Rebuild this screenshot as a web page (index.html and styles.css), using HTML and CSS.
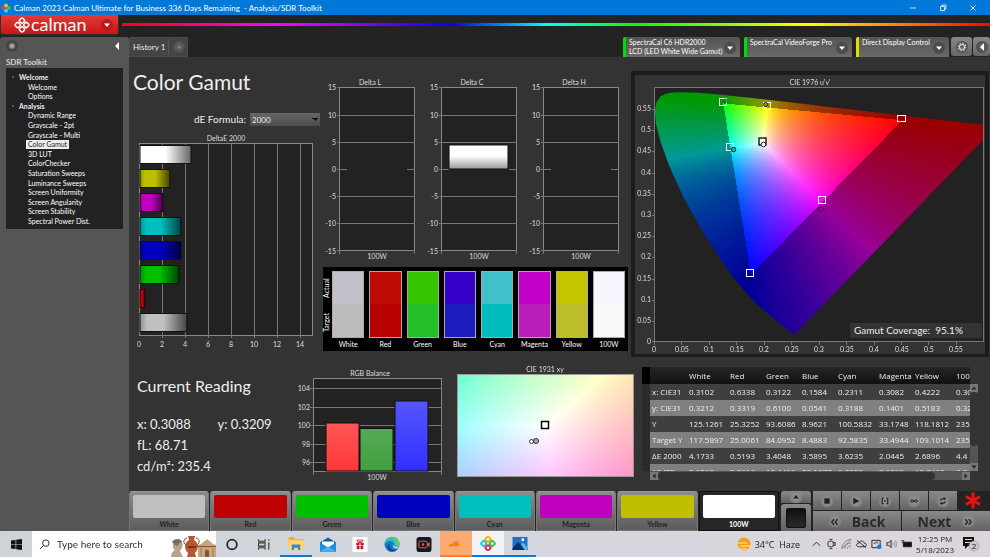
FILE: index.html
```html
<!DOCTYPE html>
<html lang="en">

<head>
    <meta charset="UTF-8">
    <meta name="viewport" content="width=device-width, initial-scale=1.0">
    <title>Calman - SDR Toolkit</title>
    <link rel="stylesheet" href="styles.css">
</head>

<body>
    <header class="titlebar">
        <svg class="app-icon" viewBox="0 0 10 10">
            <circle cx="5" cy="2.4" r="2" fill="#e8c21c" />
            <circle cx="2.3" cy="5" r="2" fill="#e6355f" />
            <circle cx="7.6" cy="5" r="2" fill="#37c948" />
            <circle cx="5" cy="7.7" r="2" fill="#3fd0e8" />
        </svg>
        <span class="title-text">Calman 2023 Calman Ultimate for Business 336 Days Remaining&nbsp; - Analysis/SDR Toolkit</span>
        <button class="win-btn" aria-label="Minimize"><svg viewBox="0 0 8 8"><path d="M1 4h6" /></svg></button>
        <button class="win-btn" aria-label="Restore"><svg viewBox="0 0 8 8"><path d="M1.5 2.5h4v4h-4zM3 2.500V1h4v4H5.500" /></svg></button>
        <button class="win-btn" aria-label="Close"><svg viewBox="0 0 8 8"><path d="M1.500 1.500l5 5M6.500 1.500l-5 5" /></svg></button>
    </header>

    <div class="brandbar">
        <button class="logo">
            <svg class="logo-mark" viewBox="0 0 16 16">
                <g fill="none" stroke="#fff" stroke-width="1.500" transform="rotate(45 8 8)">
                    <rect x="2.700" y="2.700" width="4.500" height="4.500" rx="1.500" />
                    <rect x="8.800" y="2.700" width="4.500" height="4.500" rx="1.500" />
                    <rect x="2.700" y="8.800" width="4.500" height="4.500" rx="1.500" />
                    <rect x="8.800" y="8.800" width="4.500" height="4.500" rx="1.500" />
                </g>
            </svg>
            <span class="logo-name">calman</span>
            <span class="knob red"><svg viewBox="0 0 8 8"><path d="M0 2h8L4 6.500z" /></svg></span>
        </button>
        <div class="spectrum"></div>
    </div>

    <div class="app">
        <aside class="sidebar">
            <div class="side-top">
                <span class="knob dot"></span>
                <button class="knob" aria-label="Collapse"><svg viewBox="0 0 8 8"><path d="M6 0v8L2 4z" /></svg></button>
            </div>
            <h2>SDR Toolkit</h2>
            <nav class="tree">
                <h3>Welcome</h3>
                <a href="#">Welcome</a>
                <a href="#">Options</a>
                <h3>Analysis</h3>
                <a href="#">Dynamic Range</a>
                <a href="#">Grayscale - 2pt</a>
                <a href="#">Grayscale - Multi</a>
                <a href="#" class="current">Color Gamut</a>
                <a href="#">3D LUT</a>
                <a href="#">ColorChecker</a>
                <a href="#">Saturation Sweeps</a>
                <a href="#">Luminance Sweeps</a>
                <a href="#">Screen Uniformity</a>
                <a href="#">Screen Angularity</a>
                <a href="#">Screen Stability</a>
                <a href="#">Spectral Power Dist.</a>
            </nav>
        </aside>

        <main class="main">
            <div class="tabs">
                <div class="tab">
                    <span>History 1</span>
                    <button class="knob" aria-label="Add history">+</button>
                </div>
                <div class="devices">
                    <button class="device meter">
                        <span>SpectraCal C6 HDR2000<br>LCD (LED White Wide Gamut)</span>
                        <i class="knob"><svg viewBox="0 0 8 8"><path d="M0 2h8L4 6.500z" /></svg></i>
                    </button>
                    <button class="device source">
                        <span>SpectraCal VideoForge Pro</span>
                        <i class="knob"><svg viewBox="0 0 8 8"><path d="M0 2h8L4 6.500z" /></svg></i>
                    </button>
                    <button class="device display">
                        <span>Direct Display Control</span>
                        <i class="knob"><svg viewBox="0 0 8 8"><path d="M0 2h8L4 6.500z" /></svg></i>
                    </button>
                    <div class="tools">
                        <button class="tool" aria-label="Settings">
                            <i class="knob"><svg viewBox="0 0 12 12"><circle cx="6" cy="6" r="3" fill="none" stroke="#ddd" stroke-width="1.300" /><circle cx="6" cy="6" r="4.600" fill="none" stroke="#ddd" stroke-width="1.400" stroke-dasharray="1.600 2" /></svg></i>
                        </button>
                        <button class="tool narrow" aria-label="Hide">
                            <i class="knob"><svg viewBox="0 0 8 8"><path d="M6 0v8L2 4z" /></svg></i>
                        </button>
                    </div>
                </div>
            </div>

            <div class="dash">
                <section class="delta-e">
                    <h1>Color Gamut</h1>
                    <div class="formula">
                        <label for="formula">dE Formula:</label>
                        <select id="formula">
                            <option>2000</option>
                        </select>
                    </div>
                    <svg class="chart" viewBox="0 0 191 220">
                        <defs>
                            <linearGradient id="shade">
                                <stop offset="0" stop-color="#000" stop-opacity=".25" />
                                <stop offset=".15" stop-color="#000" stop-opacity="0" />
                                <stop offset=".5" stop-color="#000" stop-opacity="0" />
                                <stop offset="1" stop-color="#000" stop-opacity=".65" />
                            </linearGradient>
                            <linearGradient id="whiteShade">
                                <stop offset=".5" stop-color="#fff" />
                                <stop offset="1" stop-color="#666" />
                            </linearGradient>
                        </defs>
                        <text x="97" y="9" class="mid">DeltaE 2000</text>
                        <rect class="plot" x="10.500" y="11.500" width="173" height="192" />
                        <path class="grid" d="M33.500 12v194M56.500 12v194M79.500 12v194M102.500 12v194M125.500 12v194M148.500 12v194M171.500 12v194" />
                        <g stroke="#111">
                            <rect x="11" y="13.500" width="51" height="18" fill="url(#whiteShade)" />
                            <rect x="11" y="37.500" width="30" height="18" fill="#bfbf00" />
                            <rect x="11" y="61.500" width="23" height="18" fill="#bf00bf" />
                            <rect x="11" y="85.500" width="41" height="18" fill="#00bfbf" />
                            <rect x="11" y="109.500" width="41" height="18" fill="#0000bf" />
                            <rect x="11" y="133.500" width="39" height="18" fill="#00bf00" />
                            <rect x="11" y="157.500" width="5" height="18" fill="#bf0000" />
                            <rect x="11" y="181.500" width="47" height="18" fill="#c0c0c0" />
                        </g>
                        <g fill="url(#shade)">
                            <rect x="11" y="38" width="30" height="17" />
                            <rect x="11" y="62" width="23" height="17" />
                            <rect x="11" y="86" width="41" height="17" />
                            <rect x="11" y="110" width="41" height="17" />
                            <rect x="11" y="134" width="39" height="17" />
                            <rect x="11" y="158" width="5" height="17" />
                            <rect x="11" y="182" width="47" height="17" />
                        </g>
                        <g class="mid">
                            <text x="10" y="215">0</text>
                            <text x="33" y="215">2</text>
                            <text x="56" y="215">4</text>
                            <text x="79" y="215">6</text>
                            <text x="102" y="215">8</text>
                            <text x="125" y="215">10</text>
                            <text x="148" y="215">12</text>
                            <text x="171" y="215">14</text>
                        </g>
                    </svg>
                </section>

                <section class="deltas">
                    <svg class="chart" viewBox="0 0 308 192">
                        <defs>
                            <linearGradient id="barC" x2="0" y2="1">
                                <stop offset=".45" stop-color="#fff" />
                                <stop offset="1" stop-color="#999" />
                            </linearGradient>
                            <g id="frame">
                                <rect class="plot" x="19.500" y="15.500" width="75" height="163" />
                                <path class="grid" d="M17 15.500h3M17 43.500h78M17 70.500h78M17 97.500h10M87 97.500h8M17 124.500h78M17 151.500h78M17 178.500h3M19.500 178v4M94.500 178v4" />
                            </g>
                        </defs>
                        <use href="#frame" />
                        <use href="#frame" x="102" />
                        <use href="#frame" x="204" />
                        <rect x="129" y="73" width="59" height="24" fill="url(#barC)" stroke="#111" />
                        <g class="mid">
                            <text x="50" y="13">Delta L</text>
                            <text x="152" y="13">Delta C</text>
                            <text x="254" y="13">Delta H</text>
                            <text x="57" y="187">100W</text>
                            <text x="159" y="187">100W</text>
                            <text x="261" y="187">100W</text>
                        </g>
                        <g class="end">
                            <text x="16" y="18">15</text>
                            <text x="16" y="46">10</text>
                            <text x="16" y="73">5</text>
                            <text x="16" y="100">0</text>
                            <text x="16" y="127">-5</text>
                            <text x="16" y="154">-10</text>
                            <text x="16" y="182">-15</text>
                            <text x="118" y="18">15</text>
                            <text x="118" y="46">10</text>
                            <text x="118" y="73">5</text>
                            <text x="118" y="100">0</text>
                            <text x="118" y="127">-5</text>
                            <text x="118" y="154">-10</text>
                            <text x="118" y="182">-15</text>
                            <text x="220" y="18">15</text>
                            <text x="220" y="46">10</text>
                            <text x="220" y="73">5</text>
                            <text x="220" y="100">0</text>
                            <text x="220" y="127">-5</text>
                            <text x="220" y="154">-10</text>
                            <text x="220" y="182">-15</text>
                        </g>
                    </svg>
                    <div class="compare">
                        <div class="compare-side"><span>Actual</span><span>Target</span></div>
                        <div class="patch white"><i></i>White</div>
                        <div class="patch red"><i></i>Red</div>
                        <div class="patch green"><i></i>Green</div>
                        <div class="patch blue"><i></i>Blue</div>
                        <div class="patch cyan"><i></i>Cyan</div>
                        <div class="patch magenta"><i></i>Magenta</div>
                        <div class="patch yellow"><i></i>Yellow</div>
                        <div class="patch full"><i></i>100W</div>
                    </div>
                </section>

                <section class="gamut">
                    <canvas id="uv" width="350" height="278"></canvas>
                    <svg class="chart" viewBox="0 0 350 278">
                        <text x="175" y="9" class="mid">CIE 1976 u'v'</text>
                        <path class="grid" d="M19.500 266V11.500h329V266M17 265.500h332" />
                        <path class="grid" d="M17 33.500h3M17 54.500h3M17 75.500h3M17 97.500h3M17 118.500h3M17 139.500h3M17 160.500h3M17 181.500h3M17 203.500h3M17 224.500h3M17 245.500h3" />
                        <path class="grid" d="M19.500 265v4M46.500 265v4M74.500 265v4M101.500 265v4M129.500 265v4M156.500 265v4M184.500 265v4M211.500 265v4M239.500 265v4M266.500 265v4M293.500 265v4M321.500 265v4" />
                        <g class="end">
                            <text x="16" y="35">0.55</text>
                            <text x="16" y="56">0.5</text>
                            <text x="16" y="77">0.45</text>
                            <text x="16" y="99">0.4</text>
                            <text x="16" y="120">0.35</text>
                            <text x="16" y="141">0.3</text>
                            <text x="16" y="162">0.25</text>
                            <text x="16" y="183">0.2</text>
                            <text x="16" y="205">0.15</text>
                            <text x="16" y="226">0.1</text>
                            <text x="16" y="247">0.05</text>
                            <text x="16" y="268">0</text>
                        </g>
                        <g class="mid">
                            <text x="19" y="276">0</text>
                            <text x="47" y="276">0.05</text>
                            <text x="74" y="276">0.1</text>
                            <text x="102" y="276">0.15</text>
                            <text x="129" y="276">0.2</text>
                            <text x="157" y="276">0.25</text>
                            <text x="184" y="276">0.3</text>
                            <text x="212" y="276">0.35</text>
                            <text x="239" y="276">0.4</text>
                            <text x="267" y="276">0.45</text>
                            <text x="294" y="276">0.5</text>
                            <text x="321" y="276">0.55</text>
                        </g>
                        <g fill="none" stroke="#fff" stroke-width="1">
                            <rect x="84.500" y="22.500" width="7" height="7" />
                            <rect x="128.500" y="26.500" width="7" height="7" />
                            <rect x="262.500" y="39.500" width="8" height="6" />
                            <rect x="91.500" y="67.500" width="7" height="7" />
                            <rect x="183.500" y="120.500" width="7" height="7" />
                            <rect x="111.500" y="193.500" width="7" height="7" />
                        </g>
                        <g stroke="#222" fill="none">
                            <rect x="124" y="62" width="7" height="7" stroke-width="1.500" />
                            <circle cx="90" cy="25" r="2" stroke="#063" />
                            <circle cx="130.500" cy="28.500" r="2" />
                            <circle cx="265" cy="43" r="2" stroke="#600" />
                            <circle cx="98.500" cy="73.500" r="2.300" fill="#0bb" />
                            <circle cx="128.500" cy="68.500" r="2.300" fill="#fff" />
                            <circle cx="186" cy="133" r="2" fill="#a0a" stroke="#404" />
                            <circle cx="124" cy="203" r="2" stroke="#006" />
                        </g>
                    </svg>
                    <div class="coverage">Gamut Coverage:&nbsp; 95.1%</div>
                </section>
            </div>

            <div class="dash lower">
                <section class="reading">
                    <h2>Current Reading</h2>
                    <div class="values">
                        <span>x: 0.3088</span>
                        <span>y: 0.3209</span>
                        <span>fL: 68.71</span>
                        <span></span>
                        <span>cd/m²: 235.4</span>
                    </div>
                </section>

                <section>
                    <svg class="chart" viewBox="0 0 148 122">
                        <defs>
                            <linearGradient id="rr" x2="0" y2="1"><stop stop-color="#f55" /><stop offset="1" stop-color="#ff3838" /></linearGradient>
                            <linearGradient id="gg" x2="0" y2="1"><stop stop-color="#5a5" /><stop offset="1" stop-color="#3f9f3f" /></linearGradient>
                            <linearGradient id="bb" x2="0" y2="1"><stop stop-color="#55f" /><stop offset="1" stop-color="#3030ff" /></linearGradient>
                        </defs>
                        <text x="72" y="12" class="mid">RGB Balance</text>
                        <rect class="plot" x="15.500" y="14.500" width="128" height="93" />
                        <path class="grid" d="M12 24.500h132M12 43.500h132M12 61.500h132M12 80.500h132M12 98.500h132M15.500 107v4M143.500 107v4" />
                        <g stroke="#111">
                            <rect x="28" y="59" width="33" height="48" fill="url(#rr)" />
                            <rect x="62" y="64.500" width="33" height="42.500" fill="url(#gg)" />
                            <rect x="97" y="37" width="33" height="70" fill="url(#bb)" />
                        </g>
                        <g class="end">
                            <text x="12" y="27">104</text>
                            <text x="12" y="46">102</text>
                            <text x="12" y="64">100</text>
                            <text x="12" y="83">98</text>
                            <text x="12" y="101">96</text>
                        </g>
                        <text x="79" y="116" class="mid">100W</text>
                    </svg>
                </section>

                <section class="xy">
                    <canvas id="xy" width="193" height="122"></canvas>
                    <svg class="chart" viewBox="0 0 193 122">
                        <text x="99" y="8" class="mid">CIE 1931 xy</text>
                        <rect x="11.500" y="10.500" width="176" height="102" fill="none" stroke="#999" />
                        <rect x="95.500" y="57.500" width="7" height="7" fill="#fff" stroke="#000" stroke-width="1.500" />
                        <circle cx="85.500" cy="77.500" r="2" fill="#fff" stroke="#333" />
                        <circle cx="90" cy="77" r="2.500" fill="#aaa" stroke="#333" />
                    </svg>
                </section>

                <section class="data">
                    <div class="table-wrap">
                        <table>
                            <thead>
                                <tr><th></th><th>White</th><th>Red</th><th>Green</th><th>Blue</th><th>Cyan</th><th>Magenta</th><th>Yellow</th><th>100W</th></tr>
                            </thead>
                            <tbody>
                                <tr><td>x: CIE31</td><td>0.3102</td><td>0.6338</td><td>0.3122</td><td>0.1584</td><td>0.2311</td><td>0.3082</td><td>0.4222</td><td>0.3088</td></tr>
                                <tr><td>y: CIE31</td><td>0.3212</td><td>0.3319</td><td>0.6100</td><td>0.0541</td><td>0.3188</td><td>0.1401</td><td>0.5183</td><td>0.3209</td></tr>
                                <tr><td>Y</td><td>125.1261</td><td>25.3252</td><td>93.6086</td><td>8.9621</td><td>100.5832</td><td>33.1748</td><td>118.1812</td><td>235.4</td></tr>
                                <tr><td>Target Y</td><td>117.5897</td><td>25.0061</td><td>84.0952</td><td>8.4883</td><td>92.5835</td><td>33.4944</td><td>109.1014</td><td>235.4</td></tr>
                                <tr><td>ΔE 2000</td><td>4.1733</td><td>0.5193</td><td>3.4048</td><td>3.5895</td><td>3.6235</td><td>2.0445</td><td>2.6896</td><td>4.4</td></tr>
                                <tr><td>ΔE ITP</td><td>5.6298</td><td>5.0616</td><td>13.4491</td><td>20.1877</td><td>9.0852</td><td>7.9299</td><td>10.7468</td><td>3.3</td></tr>
                            </tbody>
                        </table>
                    </div>
                    <div class="scroll-y"><svg viewBox="0 0 8 8"><path d="M1.500 5.500L4 2.500l2.500 3z" /></svg><i></i><svg viewBox="0 0 8 8"><path d="M1.500 2.500L4 5.500l2.500-3z" /></svg></div>
                    <div class="scroll-x"><svg viewBox="0 0 8 8"><path d="M5.500 1.500L2.500 4l3 2.500z" /></svg><i></i><svg viewBox="0 0 8 8"><path d="M2.500 1.500L5.500 4l-3 2.500z" /></svg></div>
                </section>
            </div>

            <div class="bottom">
                <div class="swatches">
                    <button class="swatch white"><i></i>White</button>
                    <button class="swatch red"><i></i>Red</button>
                    <button class="swatch green"><i></i>Green</button>
                    <button class="swatch blue"><i></i>Blue</button>
                    <button class="swatch cyan"><i></i>Cyan</button>
                    <button class="swatch magenta"><i></i>Magenta</button>
                    <button class="swatch yellow"><i></i>Yellow</button>
                    <button class="swatch full active"><i></i>100W</button>
                </div>
                <div class="pattern">
                    <button aria-label="Pattern up"><i class="knob"><svg viewBox="0 0 8 8"><path d="M1 5.500h6L4 2z" /></svg></i></button>
                    <button class="pattern-view" aria-label="Pattern"><i></i></button>
                </div>
                <div class="controls">
                    <div class="transport">
                        <button aria-label="Stop"><i class="knob"><svg viewBox="0 0 12 12"><path d="M2 2h8v8H2z" /></svg></i></button>
                        <button aria-label="Play"><i class="knob"><svg viewBox="0 0 12 12"><path d="M2 1l9 5-9 5z" /></svg></i></button>
                        <button aria-label="Read series"><i class="knob"><svg viewBox="0 0 12 12"><path d="M1 1h3v1.500H2.700v7H4V11H1zM11 1H8v1.500h1.300v7H8V11h3zM4 6l2-2v1.300h2V6.700H6V8z" /></svg></i></button>
                        <button aria-label="Continuous"><i class="knob"><svg viewBox="0 0 12 12"><path d="M6 6C4.500 3.500 1 3.500 1 6s3.500 2.500 5 0 5-2.500 5 0-3.500 2.500-5 0z" fill="none" stroke="#222" stroke-width="1.500" /></svg></i></button>
                        <button aria-label="Repeat"><i class="knob"><svg viewBox="0 0 12 12"><path d="M2.500 5.500c0-2.500 2-3 5-3M9.500 6.500c0 2.500-2 3-5 3" fill="none" stroke="#222" stroke-width="1.700" /><path d="M7 0l4 2.500L7 5zM5 7L1 9.500 5 12z" /></svg></i></button>
                        <svg class="asterisk" viewBox="0 0 18 18"><path d="M9 1v16M2 5l14 8M16 5L2 13" /></svg>
                    </div>
                    <div class="steps">
                        <button><i class="knob">«</i>Back</button>
                        <button>Next<i class="knob">»</i></button>
                    </div>
                </div>
            </div>
        </main>
    </div>

    <footer class="taskbar">
        <button class="task" aria-label="Start"><svg viewBox="0 0 12 12" fill="#111"><path d="M0 1.700l5-.7v4.700H0zM5.700.9L12 0v5.700H5.700zM0 6.300h5V11l-5-.7zM5.700 6.300H12V12l-6.300-.9z" /></svg></button>
        <label class="search">
            <svg class="lens" viewBox="0 0 12 12"><circle cx="7.500" cy="4.500" r="3.500" /><path d="M5 7l-4 4" /></svg>
            <input type="text" placeholder="Type here to search" aria-label="Search">
            <svg class="museum" viewBox="0 0 46 22">
                <path d="M1 22c0-4 2-6 4-7-3-1-3-9 1-10 5-2 8 2 6 8l-2 3 3 6z" fill="#b5a58c" />
                <path d="M2 7c2-4 9-4 10 0l-3 1-1 3-3-1z" fill="#786c5c" />
                <path d="M18 1h7l-1 4c5 3 5 9 1 13l1 4h-9l1-4c-4-4-4-10 1-13z" fill="#b85532" />
                <path d="M17 3c-4 1-4 5-1 7M26 3c4 1 4 5 1 7" fill="none" stroke="#8b3a22" />
                <path d="M18 11h8v2h-8z" fill="#7a321e" />
                <path d="M28 22V10l3-1 6-5 6 5 3 1v12z" fill="#c9a57d" />
                <path d="M27 11h19v1H27zM35 22v-6q2-3 4 0v6z" fill="#7b5839" />
                <path d="M31 13v9M43 13v9" stroke="#9b7a55" />
            </svg>
        </label>
        <button class="task" aria-label="Cortana"><svg viewBox="0 0 14 14"><circle cx="7" cy="7" r="4.500" fill="none" stroke="#222" stroke-width="1.600" /></svg></button>
        <button class="task" aria-label="Task view"><svg viewBox="0 0 14 14" fill="none" stroke="#333"><path d="M2 2v2h6V2M2 12v-2h6v2M2 5.500h6v3H2zM11.500 2v1.500M11.500 5v7" /></svg></button>
        <button class="task open" aria-label="File Explorer"><svg viewBox="0 0 14 14"><path d="M0 1h5l1 2h8v9H0z" fill="#f2b32c" /><path d="M0 4h14v8H0z" fill="#ffd968" /><path d="M3 13V8h8v5H9v-2H5v2z" fill="#2f86d8" /></svg></button>
        <button class="task" aria-label="Mail"><svg viewBox="0 0 16 14"><path d="M0 5l8-5 8 5v9H0z" fill="#0a5ca8" /><path d="M2 4h12v6H2z" fill="#fff" /><path d="M0 5l8 5 8-5v9H0z" fill="#1f8de0" /><path d="M0 14l8-5 8 5z" fill="#47b5f2" /></svg></button>
        <button class="task" aria-label="Gift"><svg viewBox="0 0 16 16"><path d="M0 0h16v16H0z" fill="#fff" /><path d="M4 6h3.500v2.500H4zM8.500 6H12v2.500H8.500zM4.500 9h3v4h-3zM8.500 9h3v4h-3z" fill="#c3142b" /><path d="M8 6C5 6 4 3 6 3s2 3 2 3 0-3 2-3 1 3-2 3z" fill="none" stroke="#c3142b" /></svg></button>
        <button class="task" aria-label="Edge"><svg viewBox="0 0 16 16"><circle cx="8" cy="8" r="8" fill="#1479c9" /><path d="M0 8C0-2 16-3 16 7c0 4-6 4-6 1 1-4-6-6-10 0z" fill="#39bfb0" /><path d="M8 1c5 0 8 3 8 6 0 2-1 3-3 3 1-4-1-7-5-9z" fill="#65d65b" /><path d="M6 8c-2 4 2 7 8 5-3 3-8 3-10 0-2-2 0-5 2-5z" fill="#0c4b93" /><path d="M9 8c0 2 3 3 6 2l-1 2c-3 1-6-1-5-4z" fill="#d5d7df" /></svg></button>
        <button class="task" aria-label="Recorder"><svg viewBox="0 0 16 16"><rect width="16" height="16" rx="3" fill="#17191d" /><rect x="2.500" y="4.500" width="9" height="7" rx="1.500" fill="none" stroke="#ff5261" /><path d="M11.500 7l2.500-1.500v5L11.500 9z" fill="#ff5261" /><circle cx="7" cy="8" r="1.300" fill="#ff5261" /></svg></button>
        <button class="task orange" aria-label="Cloud"><svg viewBox="0 0 16 16"><path d="M0 11c0-2 2-3 4-2 1-4 6-5 7-1l1 3z" fill="#f6821f" /><path d="M12 11c0-2 0-3 1-3 2 0 3 1 3 3z" fill="#fbad41" /></svg></button>
        <button class="task open lit" aria-label="Calman"><svg viewBox="0 0 16 16"><g transform="rotate(45 8 8)" stroke-width="2" fill="#fff"><rect x="2.500" y="2.500" width="4.500" height="4.500" rx="1" stroke="#f0b500" /><rect x="9" y="2.500" width="4.500" height="4.500" rx="1" stroke="#35c53d" /><rect x="2.500" y="9" width="4.500" height="4.500" rx="1" stroke="#25c2dd" /><rect x="9" y="9" width="4.500" height="4.500" rx="1" stroke="#e5245e" /></g></svg></button>
        <button class="task open" aria-label="Photos"><svg viewBox="0 0 16 16"><path d="M0 1h16v14H0z" fill="#1d72c8" /><path d="M0 13l6-7 6 7 2-2 2 2v2H0z" fill="#0b2f63" /><path d="M9 9l2-2 5 5v3h-3z" fill="#55b5f5" /><circle cx="11" cy="4" r="1.500" fill="#fff" /></svg></button>

        <div class="tray">
            <svg class="sun" viewBox="0 0 14 14"><circle cx="7" cy="7" r="6.500" fill="#f6a01a" /><path d="M0 6h10M3 9h11M1 12h9" stroke="#ffd27a" stroke-width="1.300" /></svg>
            <span class="weather">34°C&nbsp; Haze</span>
            <svg viewBox="0 0 12 12"><path d="M2 8l4-4 4 4" /></svg>
            <svg viewBox="0 0 12 12"><rect x="2" y="3" width="6" height="6" rx="2" /><path d="M8 4.500h2v3H8M4 1h3M4 11h3" /></svg>
            <svg viewBox="0 0 12 12"><path d="M1 11C1 6 6 1 11 1M4 11c0-3 3-6 7-6M7 11c0-2 2-3 4-3M10 11l1-1M1 11L11 1" stroke="#777" /></svg>
            <svg viewBox="0 0 12 12"><path d="M3 9c-3 0-3-4 0-4 1-3 5-3 6 0 3 0 3 4 0 4zM1 2l10 8" /></svg>
            <svg viewBox="0 0 12 12"><path d="M1 2h9v8H1zM3 5h2l2-2M7 5h1" /><circle cx="9" cy="9" r="2.500" fill="#1f78d8" stroke="none" /></svg>
            <svg viewBox="0 0 12 12"><path d="M1 4.500h2L5.500 2v8L3 7.500H1z" /><path d="M7.500 4.500q1 1.500 0 3M9 3q2 3 0 6M10.500 2q2.500 4 0 8" stroke="#999" /></svg>
            <svg viewBox="0 0 12 12"><path d="M2.500 4h9v5h-9z" fill="#111" /><path d="M0 2.500h3v2H1" /></svg>
            <div class="clock">12:25 PM<br>5/18/2023</div>
            <svg class="note" viewBox="0 0 18 16"><path d="M1 1h11v9H6l-3 3v-3H1z" fill="#111" stroke="none" /><path d="M3 3.500h7M3 6.500h7" stroke="#ddd" /><circle cx="12" cy="10" r="5" fill="#c9c9ce" stroke="#888" stroke-width=".5" /><text x="12" y="13">2</text></svg>
        </div>
    </footer>

    <script src="script.js"></script>
</body>

</html>
```

FILE: styles.css
```css
* {
    box-sizing: border-box;
}

body {
    margin: 0;
    min-height: 100vh;
    display: flex;
    flex-direction: column;
    background: #232323;
    color: #eee;
    font-family: Lato, "Open Sans", sans-serif;
    font-size: 7px;
}

h1,
h2,
h3 {
    margin: 0;
    font-weight: normal;
}

button {
    margin: 0;
    padding: 0;
    border: 0;
    background: none;
    color: inherit;
    font: inherit;
}

svg {
    display: block;
}

/* Window title */
.titlebar {
    display: flex;
    align-items: center;
    height: 15px;
    padding: 0 2px 0 1px;
    background: #0078d7;
    color: #fff;
    font-size: 8px;
}

.app-icon {
    width: 10px;
    height: 10px;
    margin-right: 3px;
}

.title-text {
    flex: 1;
}

.win-btn {
    width: 30px;
    height: 15px;
    display: flex;
    align-items: center;
    justify-content: center;
}

.win-btn svg {
    width: 8px;
    fill: none;
    stroke: #fff;
    stroke-width: 0.8;
}

/* Logo and spectrum line */
.brandbar {
    display: flex;
    align-items: flex-start;
    gap: 4px;
    height: 22px;
    padding-left: 1px;
}

.logo {
    display: flex;
    align-items: center;
    width: 117px;
    height: 19px;
    padding-left: 13px;
    border-radius: 0 0 2px 2px;
    background: linear-gradient(#e23a3a, #c91515);
    box-shadow: 0 0 1px #f88;
}

.logo-mark {
    width: 16px;
    height: 16px;
}

.logo-name {
    margin-left: 1px;
    flex: 1;
    text-align: left;
    font: 18px/18px Lato, sans-serif;
    color: #fff;
    padding-bottom: 2px;
}

.spectrum {
    flex: 1;
    height: 3px;
    margin-top: 8px;
    background: linear-gradient(90deg, #f00, #f0f 18%, #00f 38%, #0ff 49%, #0f0 59%, #ff0 79%, #f00);
}

.knob {
    width: 12px;
    height: 12px;
    flex: none;
    display: flex;
    align-items: center;
    justify-content: center;
    border-radius: 50%;
    background: radial-gradient(#666, #444);
    font-style: normal;
}

.knob svg {
    width: 6px;
    height: 6px;
    fill: #fff;
}

.knob.red {
    background: #b91a1a;
    margin-right: 5px;
}

.knob.dot {
    background: radial-gradient(#aaa 15%, #444 45%);
}

.app {
    flex: 1;
    display: flex;
}

/* Sidebar */
.sidebar {
    width: 129px;
    flex: none;
    padding: 3px 6px;
    background: #555;
    border-radius: 3px 3px 0 0;
}

.side-top {
    display: flex;
    justify-content: space-between;
}

.side-top button {
    background: none;
}

.side-top svg {
    width: 8px;
    height: 8px;
}

.sidebar h2 {
    margin-top: 5px;
    font-size: 8px;
    line-height: 11px;
}

.tree {
    display: flex;
    flex-direction: column;
    align-items: flex-start;
    justify-content: space-between;
    min-height: 161px;
    padding: 5px 0 3px 20px;
    background: #222;
}

.tree h3 {
    margin-left: -7px;
    font-size: 7px;
    font-weight: bold;
    line-height: 9px;
}

.tree h3::before {
    content: "";
    display: inline-block;
    width: 2px;
    height: 2px;
    margin: 0 5px 2px -7px;
    background: #555;
}

.tree a {
    padding: 0 2px;
    color: #fff;
    line-height: 9px;
    text-decoration: none;
}

.tree a.current {
    background: #eee;
    color: #222;
}

/* Main column */
.main {
    flex: 1;
    min-width: 0;
    display: flex;
    flex-direction: column;
    background: #333;
}

.tabs {
    display: flex;
    justify-content: space-between;
    height: 20px;
    background: #232323;
}

.tab {
    display: flex;
    align-items: center;
    gap: 4px;
    width: 59px;
    padding-left: 4px;
    border-radius: 3px 3px 0 0;
    background: #444;
    box-shadow: inset 0 0 1px #888;
    font-size: 8px;
}

.tab span {
    padding-right: 3px;
    border-right: 1px solid #555;
    line-height: 16px;
    white-space: nowrap;
}

.tab .knob {
    color: #999;
}

.devices {
    display: flex;
    gap: 4px;
}

.device {
    display: flex;
    justify-content: space-between;
    padding: 1px 4px 0 3px;
    border-left: 3px solid #0d0;
    border-radius: 2px 3px 0 0;
    background: linear-gradient(#555, #6a6a6a);
    color: #fff;
    text-align: left;
    line-height: 9px;
    white-space: nowrap;
}

.device .knob {
    align-self: center;
    background: #4c4c4c;
}

.meter {
    width: 117px;
}

.source {
    width: 108px;
}

.display {
    width: 93px;
    border-color: #dd0;
}

.tools {
    display: flex;
    gap: 1px;
    margin-left: -2px;
}

.tool {
    width: 21px;
    height: 19px;
    display: flex;
    align-items: center;
    justify-content: center;
    border-radius: 3px;
    background: linear-gradient(#888, #666);
}

.tool.narrow {
    width: 17px;
}

.tool .knob svg {
    width: 10px;
    height: 10px;
}

.tool.narrow .knob svg {
    width: 8px;
    height: 8px;
}

/* Chart panels */
.dash {
    display: grid;
    grid-template-columns: 191fr 311fr 359fr;
}

.lower {
    grid-template-columns: 169fr 148fr 193fr 351fr;
    flex: 1;
    margin-top: 7px;
}

.chart {
    width: 100%;
}

.chart text {
    fill: #ddd;
    font-size: 7px;
}

.mid {
    text-anchor: middle;
}

.end {
    text-anchor: end;
}

.plot {
    fill: #222;
    stroke: #888;
}

.grid {
    fill: none;
    stroke: #777;
}

.delta-e h1 {
    padding: 11px 4px 0;
    font-size: 21px;
    line-height: 28px;
}

.formula {
    display: flex;
    align-items: center;
    justify-content: flex-end;
    gap: 4px;
    margin: 17px 0 6px;
    font-size: 10px;
    line-height: 13px;
}

.formula select {
    width: 70px;
    height: 13px;
    padding: 0 0 0 2px;
    border: 0;
    appearance: none;
    background: linear-gradient(45deg, transparent 50%, #111 50%) 62px 5px / 3px 3px no-repeat, linear-gradient(-45deg, transparent 50%, #111 50%) 65px 5px / 3px 3px no-repeat, linear-gradient(#666, #4c4c4c);
    color: #eee;
    font: 8px Lato, sans-serif;
}

.deltas {
    padding: 15px 3px 0 0;
}

.compare {
    display: flex;
    gap: 5px;
    height: 84px;
    margin: 3px 0 0 3px;
    padding: 4px 3px 0 0;
    background: #000;
    color: #fff;
}

.compare-side {
    display: flex;
    flex-direction: row-reverse;
    justify-content: space-around;
    width: 4px;
    height: 68px;
    writing-mode: vertical-rl;
    transform: rotate(180deg);
    line-height: 6px;
}

.patch {
    flex: 1 1 0;
    min-width: 0;
    display: flex;
    flex-direction: column;
    align-items: center;
    line-height: 13px;
}

.patch i {
    width: 100%;
    height: 68px;
    border: 1px solid #aaa;
    background: linear-gradient(var(--actual) 50%, var(--target) 50%);
}

.white { --actual: #c3c0c9; --target: #bcbcbc; --color: #bfbfbf; }
.patch.red, .swatch.red { --actual: #be0b06; --target: #b80000; --color: #bf0000; }
.green { --actual: #36c600; --target: #22bf28; --color: #00bf00; }
.blue { --actual: #3700ca; --target: #1e1ebe; --color: #0000bf; }
.cyan { --actual: #40c1ca; --target: #00bebe; --color: #00bfbf; }
.magenta { --actual: #c100c8; --target: #ba1fba; --color: #bf00bf; }
.yellow { --actual: #c4c500; --target: #bebe28; --color: #bfbf00; }
.full { --actual: #f8f6ff; --target: #f9f9f9; --color: #fff; }

.gamut,
.xy {
    display: grid;
    align-items: start;
}

.gamut > *,
.xy > * {
    grid-area: 1 / 1;
}

.gamut {
    align-self: start;
    margin-top: 14px;
    margin-right: 1px;
    padding-top: 1px;
    border: 4px solid #1c1c1c;
    border-bottom-width: 3px;
}

canvas {
    width: 100%;
    display: block;
}

.coverage {
    align-self: end;
    justify-self: end;
    width: 132px;
    margin: 0 3px 16px 0;
    padding-left: 4px;
    position: relative;
    background: #333;
    font-size: 10px;
    line-height: 15px;
}

/* Lower row */
.reading {
    padding: 11px 0 0 8px;
}

.reading h2 {
    font-size: 16px;
    line-height: 22px;
}

.values {
    display: grid;
    grid-template-columns: 1fr 1fr;
    margin-top: 17px;
    font-size: 13px;
    line-height: 21px;
}

.data {
    display: grid;
    grid-template-columns: 1fr 8px;
    grid-template-rows: 104px 9px;
    align-content: start;
    padding: 3px 12px 0 3px;
}

.table-wrap {
    overflow: hidden;
    padding-left: 8px;
    background: linear-gradient(#000, #000) 0 0 / 8px 17px no-repeat, linear-gradient(#2a2a2a, #2a2a2a) 0 0 / 8px 100% no-repeat;
}

table {
    width: 340px;
    table-layout: fixed;
    border-collapse: collapse;
    font-family: "Open Sans", sans-serif;
    font-size: 8px;
    line-height: 16px;
}

th,
td {
    padding: 0 0 0 2px;
    text-align: left;
    font-weight: normal;
    white-space: nowrap;
}

th {
    width: 36px;
    height: 17px;
    background: linear-gradient(#262626, #111);
}

th:nth-child(1) {
    width: 37px;
}

th:nth-child(2),
th:nth-child(6),
th:nth-child(8) {
    width: 41px;
}

td {
    background: #3f3f3f;
}

tbody tr:nth-child(even) td {
    background: #808080;
}

.scroll-y,
.scroll-x {
    display: flex;
    background: #555;
}

.scroll-y {
    flex-direction: column;
    margin-top: 17px;
}

.scroll-x {
    margin-left: 8px;
    align-items: center;
}

.scroll-y svg,
.scroll-x svg {
    width: 8px;
    height: 8px;
    flex: none;
    background: #777;
    fill: #222;
}

.scroll-y i {
    flex: 0 1 54px;
    margin-bottom: auto;
    border-radius: 4px;
    background: #333;
}

.scroll-x i {
    flex: 0 1 277px;
    height: 8px;
    margin-right: auto;
    border-radius: 4px;
    background: #333;
}

/* Pattern buttons */
.bottom {
    display: flex;
    height: 40px;
    gap: 2px;
    background: #232323;
}

.swatches {
    flex: 1;
    display: flex;
    gap: 1px;
}

.swatch {
    flex: 1 1 0;
    padding: 3px 3px 0;
    border: 1px solid #777;
    border-top-color: #999;
    border-radius: 3px 3px 0 0;
    background: linear-gradient(#8c8c8c, #5c5c5c);
    color: #222;
    font-size: 7px;
    font-weight: bold;
    line-height: 13px;
}

.swatch i {
    display: block;
    height: 23px;
    border-radius: 2px;
    background: var(--color);
}

.swatch.active {
    border-color: #111;
    background: #262626;
    color: #fff;
}

.pattern {
    width: 30px;
    display: flex;
    flex-direction: column;
    gap: 1px;
}

.pattern button,
.transport button,
.steps button {
    display: flex;
    align-items: center;
    justify-content: center;
    background: linear-gradient(#8a8a8a, #626262);
}

.pattern button {
    height: 12px;
    border-radius: 3px 3px 0 0;
}

.pattern .pattern-view {
    height: 27px;
}

.pattern-view i {
    width: 20px;
    height: 20px;
    border: 1px solid #111;
    border-radius: 2px;
    background: linear-gradient(#111, #2a2a2a);
}

.bottom .knob {
    background: radial-gradient(#999, #777);
    box-shadow: 0 0 1px #aaa;
    color: #333;
}

.bottom .knob svg {
    width: 8px;
    height: 8px;
    fill: #222;
}

.controls {
    width: 177px;
    display: flex;
    flex-direction: column;
    gap: 1px;
}

.transport {
    display: flex;
    gap: 1px;
    height: 19px;
}

.transport button {
    flex: 1;
}

.transport .asterisk {
    width: 32px;
    height: 19px;
    padding: 0 8px 0 6px;
    fill: none;
    stroke: #f01010;
    stroke-width: 3;
}

.steps {
    flex: 1;
    display: flex;
    gap: 1px;
}

.steps button {
    flex: 1;
    gap: 11px;
    color: #2a2a2a;
    font: bold 14px "Open Sans", sans-serif;
}

.steps .knob {
    line-height: 12px;
}

/* Taskbar */
.taskbar {
    display: flex;
    height: 26px;
    background: linear-gradient(90deg, #ced2d9, #d5d7df 50%, #ddd5dc);
    color: #222;
    font-family: "Open Sans", sans-serif;
}

.task {
    width: 32px;
    display: flex;
    align-items: center;
    justify-content: center;
}

.task svg {
    width: 16px;
    height: 15px;
}

.task:first-child svg {
    width: 11px;
}

.task.open {
    border-bottom: 2px solid #0a78d4;
}

.task.orange {
    background: #f9ab72;
    border-bottom: 2px solid #f58231;
}

.task.lit {
    background: #f1f2f5;
}

.search {
    width: 184px;
    display: flex;
    align-items: center;
    background: #fff;
}

.lens {
    width: 11px;
    margin-left: 7px;
    fill: none;
    stroke: #222;
}

.search input {
    flex: 1;
    min-width: 0;
    padding: 0 0 0 7px;
    border: 0;
    background: none;
    font: 10px Lato, "Open Sans", sans-serif;
}

.search input::placeholder {
    color: #333;
}

.museum {
    width: 46px;
    height: 22px;
    align-self: flex-end;
}

.tray {
    flex: 1;
    display: flex;
    align-items: center;
    justify-content: flex-end;
    gap: 4px;
    padding-right: 10px;
}

.tray svg {
    width: 11px;
    height: 12px;
    fill: none;
    stroke: #222;
}

.tray .sun {
    width: 14px;
    height: 14px;
    stroke: none;
}

.weather {
    margin: 0 7px 0 0;
    font-size: 9px;
}

.clock {
    margin: 0 4px 0 0;
    font-size: 8px;
    line-height: 11px;
    text-align: center;
}

.tray .note {
    width: 18px;
    height: 16px;
}

.note text {
    fill: #111;
    stroke: none;
    font-size: 8px;
    text-anchor: middle;
}
```

FILE: script.js
```js
// Spectral locus, CIE 1931 x,y pairs
const locus = [
    [.1741, .005], [.1714, .0051], [.1644, .0109], [.1566, .0177], [.144, .0297], [.1355, .0399],
    [.1241, .0578], [.1096, .0868], [.0913, .1327], [.0687, .2007], [.0454, .295], [.0235, .4127],
    [.0082, .5384], [.0039, .6548], [.0139, .7502], [.0389, .812], [.0743, .8338], [.1142, .8262],
    [.1547, .8059], [.2296, .7543], [.3016, .6923], [.3731, .6245], [.4441, .5547], [.5125, .4866],
    [.5752, .4242], [.627, .3725], [.6658, .334], [.6915, .3083], [.719, .2809], [.7347, .2653]
];

function xyToRgb(x, y, gamma) {
    const X = x / y;
    const Z = (1 - x - y) / y;
    const lin = [
        3.2406 * X - 1.5372 - 0.4986 * Z,
        -0.9689 * X + 1.8758 + 0.0415 * Z,
        0.0557 * X - 0.204 + 1.057 * Z
    ];
    const max = Math.max(...lin);
    const rgb = lin.map(c => 255 * Math.pow(Math.max(c / max, 0), 1 / gamma));
    return { rgb, inside: Math.min(...lin) >= 0 };
}

// Fills a canvas rectangle using a colour callback
function paint(ctx, left, top, width, height, colorAt) {
    const layer = document.createElement("canvas");
    layer.width = width;
    layer.height = height;
    const layerCtx = layer.getContext("2d");
    const image = layerCtx.createImageData(width, height);
    for (let j = 0; j < height; j++) {
        for (let i = 0; i < width; i++) {
            const c = colorAt(i / width, j / height);
            image.data.set([c[0], c[1], c[2], 255], (j * width + i) * 4);
        }
    }
    layerCtx.putImageData(image, 0, 0);
    ctx.drawImage(layer, left, top);
}

function drawUv() {
    const ctx = document.getElementById("uv").getContext("2d");
    ctx.fillStyle = "#222";
    ctx.fillRect(19, 11, 330, 254);
    ctx.beginPath();
    ctx.rect(19, 11, 330, 254);
    ctx.clip();
    ctx.beginPath();
    locus.forEach(([x, y]) => {
        const d = -2 * x + 12 * y + 3;
        ctx.lineTo(19 + (4 * x / d) * 549, 265 - (9 * y / d) * 424);
    });
    ctx.closePath();
    ctx.clip();
    paint(ctx, 19, 11, 330, 254, (px, py) => {
        const u = px * 0.6;
        const v = (1 - py) * 0.6 + 0.0001;
        const d = 6 * u - 16 * v + 12;
        const { rgb, inside } = xyToRgb(9 * u / d, 4 * v / d, 1.2);
        return inside ? rgb : rgb.map(c => c * 0.6);
    });
}

function drawXy() {
    const ctx = document.getElementById("xy").getContext("2d");
    paint(ctx, 12, 11, 176, 102, (px, py) =>
        xyToRgb(0.3127 + (px - 0.5) * 0.105, 0.329 + (0.5 - py) * 0.11, 2.2).rgb);
}

drawUv();
drawXy();
```
